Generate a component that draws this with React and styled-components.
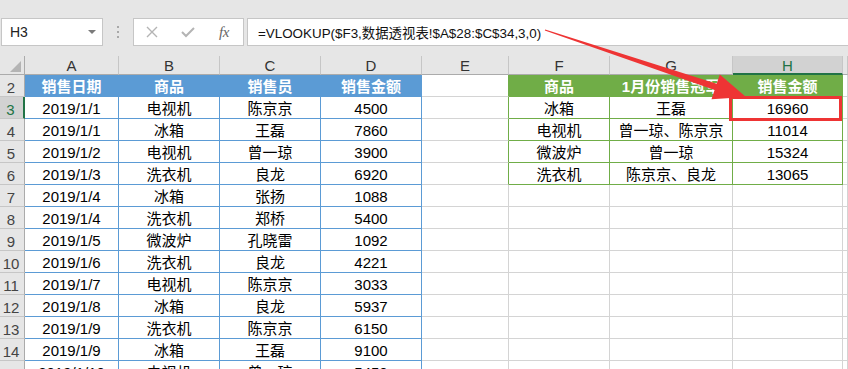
import React from 'react';
import styled, { createGlobalStyle, css } from 'styled-components';

const GlobalStyle = createGlobalStyle`
  html, body { margin: 0; padding: 0; background: #fff; overflow: hidden; }
  body { font-family: "Liberation Sans", "Noto Sans CJK SC", sans-serif; }
`;

const BLUE = '#5b9bd5';
const GREEN = '#70ad47';
const GRID = '#d4d4d4';
const SEL = '#217346';

const Page = styled.div`
  position: relative;
  width: 848px;
  height: 369px;
  overflow: hidden;
  display: flex;
  flex-direction: column;
  background: #fff;
`;

const Toolbar = styled.div`
  flex: 0 0 56px;
  height: 56px;
  box-sizing: border-box;
  background: #e6e6e6;
  display: flex;
  align-items: flex-start;
  padding: 18px 0 0 1px;
`;

const NameBox = styled.div`
  width: 102px;
  height: 28px;
  box-sizing: border-box;
  border: 1px solid #c6c6c6;
  background: #fff;
  display: flex;
  align-items: center;
  justify-content: space-between;
  padding: 0 6px 0 8px;
  font-size: 14px;
  color: #222;
`;

const Caret = styled.span`
  width: 0;
  height: 0;
  border-left: 4px solid transparent;
  border-right: 4px solid transparent;
  border-top: 4px solid #7a7a7a;
`;

const Grip = styled.div`
  width: 30px;
  height: 28px;
  display: flex;
  flex-direction: column;
  align-items: center;
  justify-content: center;
  gap: 3px;
`;

const GripDot = styled.span`
  width: 2px;
  height: 2px;
  background: #a8a8a8;
`;

const ButtonGroup = styled.div`
  width: 111px;
  height: 28px;
  box-sizing: border-box;
  border: 1px solid #c6c6c6;
  background: #fff;
  display: flex;
  align-items: center;
`;

const BarButton = styled.span`
  width: 36px;
  height: 26px;
  display: flex;
  align-items: center;
  justify-content: center;
  color: #b4b4b4;
`;

const FxLabel = styled.span`
  font-family: "Liberation Serif", serif;
  font-style: italic;
  font-size: 15px;
  color: #666;
  letter-spacing: -0.5px;
`;

const FormulaBox = styled.div`
  flex: 1;
  margin-left: 3px;
  height: 28px;
  box-sizing: border-box;
  border: 1px solid #c6c6c6;
  border-right: none;
  background: #fff;
  display: flex;
  align-items: center;
  padding-left: 10px;
  font-size: 13.4px;
  color: #111;
  white-space: nowrap;
`;

const Sheet = styled.div`
  display: grid;
  grid-template-columns: 25px 94px 101px 101px 101px 87px 101px 123px 110px 1fr;
  grid-template-rows: 19px;
  grid-auto-rows: 22px;
  background: #fff;
`;

const Corner = styled.div`
  box-sizing: border-box;
  background: #e6e6e6;
  border-right: 1px solid #ababab;
  border-bottom: 1px solid #ababab;
  display: flex;
  align-items: flex-end;
  justify-content: flex-end;
  padding: 0 3px 2px 0;
`;

const CornerMark = styled.span`
  width: 0;
  height: 0;
  border-left: 11px solid transparent;
  border-bottom: 11px solid #b4b4b4;
`;

const ColHead = styled.div`
  box-sizing: border-box;
  background: ${(p) => (p.$selected ? '#d2d2d2' : '#e6e6e6')};
  border-right: 1px solid #c6c6c6;
  border-bottom: ${(p) => (p.$selected ? `2px solid ${SEL}` : '1px solid #ababab')};
  color: ${(p) => (p.$selected ? SEL : '#333')};
  font-size: 15px;
  line-height: 18px;
  padding-top: 1px;
  text-align: center;
`;

const RowHead = styled.div`
  box-sizing: border-box;
  background: ${(p) => (p.$selected ? '#d2d2d2' : '#e6e6e6')};
  border-right: ${(p) => (p.$selected ? `2px solid ${SEL}` : '1px solid #ababab')};
  border-bottom: 1px solid #c6c6c6;
  color: ${(p) => (p.$selected ? SEL : '#444')};
  font-size: 15px;
  line-height: 21px;
  padding: 2px 2px 0 0;
  text-align: center;
`;

const tones = {
  blueHead: css`
    background: ${BLUE};
    border-color: ${BLUE};
    color: #fff;
    font-weight: 700;
  `,
  blue: css`
    border-color: ${BLUE};
  `,
  greenHead: css`
    background: ${GREEN};
    border-color: ${GREEN};
    color: #fff;
    font-weight: 700;
  `,
  green: css`
    border-color: ${GREEN};
  `,
  plain: css``,
};

const Cell = styled.div`
  box-sizing: border-box;
  border-style: solid;
  border-width: 0 1px 1px 0;
  border-color: ${GRID};
  background: #fff;
  color: #000;
  font-size: 15px;
  line-height: 21px;
  padding-top: 1px;
  text-align: center;
  white-space: nowrap;
  ${(p) => tones[p.$tone || 'plain']}
  ${(p) => p.$edge && css`border-right-color: ${p.$edge};`}
`;

const Annotation = styled.svg`
  position: absolute;
  left: 0;
  top: 0;
  width: 848px;
  height: 369px;
  pointer-events: none;
`;

const Highlight = styled.div`
  position: absolute;
  left: 729px;
  top: 96px;
  width: 113px;
  height: 25px;
  box-sizing: border-box;
  border: 3px solid #ee3434;
  pointer-events: none;
`;

const columns = ['A', 'B', 'C', 'D', 'E', 'F', 'G', 'H', ''];

const salesHead = ['销售日期', '商品', '销售员', '销售金额'];
const sales = [
  ['2019/1/1', '电视机', '陈京京', '4500'],
  ['2019/1/1', '冰箱', '王磊', '7860'],
  ['2019/1/2', '电视机', '曾一琼', '3900'],
  ['2019/1/3', '洗衣机', '良龙', '6920'],
  ['2019/1/4', '冰箱', '张扬', '1088'],
  ['2019/1/4', '洗衣机', '郑桥', '5400'],
  ['2019/1/5', '微波炉', '孔晓雷', '1092'],
  ['2019/1/6', '洗衣机', '良龙', '4221'],
  ['2019/1/7', '电视机', '陈京京', '3033'],
  ['2019/1/8', '冰箱', '良龙', '5937'],
  ['2019/1/9', '洗衣机', '陈京京', '6150'],
  ['2019/1/9', '冰箱', '王磊', '9100'],
  ['2019/1/10', '电视机', '曾一琼', '5450'],
];

const summaryHead = ['商品', '1月份销售冠军', '销售金额'];
const summary = [
  ['冰箱', '王磊', '16960'],
  ['电视机', '曾一琼、陈京京', '11014'],
  ['微波炉', '曾一琼', '15324'],
  ['洗衣机', '陈京京、良龙', '13065'],
];

function arrowPoints() {
  const sx = 545, sy = 30, tx = 746, ty = 97;
  const dx = tx - sx, dy = ty - sy;
  const len = Math.hypot(dx, dy);
  const ux = dx / len, uy = dy / len;
  const px = -uy, py = ux;
  const headLen = 32, headHalf = 13, shaftEnd = 3.2, shaftStart = 0.6;
  const bx = tx - ux * headLen, by = ty - uy * headLen;
  const pts = [
    [sx + px * shaftStart, sy + py * shaftStart],
    [bx + px * shaftEnd, by + py * shaftEnd],
    [bx + px * headHalf, by + py * headHalf],
    [tx, ty],
    [bx - px * headHalf, by - py * headHalf],
    [bx - px * shaftEnd, by - py * shaftEnd],
    [sx - px * shaftStart, sy - py * shaftStart],
  ];
  return pts.map((p) => p.map((v) => v.toFixed(1)).join(',')).join(' ');
}

export default function App() {
  const rows = [];
  for (let i = 0; i < 14; i++) {
    const r = i + 2;
    const isHead = i === 0;
    const sale = isHead ? salesHead : sales[i - 1];
    const inSummary = i <= 4;
    const sum = isHead ? summaryHead : inSummary ? summary[i - 1] : null;
    rows.push(
      <React.Fragment key={r}>
        <RowHead $selected={r === 3}>{r}</RowHead>
        {sale.map((v, k) => (
          <Cell key={`s${k}`} $tone={isHead ? 'blueHead' : 'blue'}>{v}</Cell>
        ))}
        <Cell $edge={inSummary ? GREEN : undefined} />
        {[0, 1, 2].map((k) => (
          <Cell
            key={`g${k}`}
            $tone={inSummary ? (isHead ? 'greenHead' : 'green') : 'plain'}
          >
            {sum ? sum[k] : ''}
          </Cell>
        ))}
        <Cell />
      </React.Fragment>
    );
  }

  return (
    <Page>
      <GlobalStyle />
      <Toolbar>
        <NameBox>
          <span>H3</span>
          <Caret />
        </NameBox>
        <Grip>
          <GripDot />
          <GripDot />
          <GripDot />
        </Grip>
        <ButtonGroup>
          <BarButton>
            <svg width="12" height="12" viewBox="0 0 12 12">
              <path d="M1 1 L11 11 M11 1 L1 11" stroke="#b4b4b4" strokeWidth="1.4" fill="none" />
            </svg>
          </BarButton>
          <BarButton>
            <svg width="14" height="12" viewBox="0 0 14 12">
              <path d="M1 6 L5 10 L13 2" stroke="#b4b4b4" strokeWidth="2" fill="none" />
            </svg>
          </BarButton>
          <BarButton>
            <FxLabel>fx</FxLabel>
          </BarButton>
        </ButtonGroup>
        <FormulaBox>=VLOOKUP($F3,数据透视表!$A$28:$C$34,3,0)</FormulaBox>
      </Toolbar>
      <Sheet>
        <Corner>
          <CornerMark />
        </Corner>
        {columns.map((c, k) => (
          <ColHead key={k} $selected={c === 'H'}>{c}</ColHead>
        ))}
        {rows}
      </Sheet>
      <Highlight />
      <Annotation viewBox="0 0 848 369">
        <polygon points={arrowPoints()} fill="#ee3434" />
      </Annotation>
    </Page>
  );
}
